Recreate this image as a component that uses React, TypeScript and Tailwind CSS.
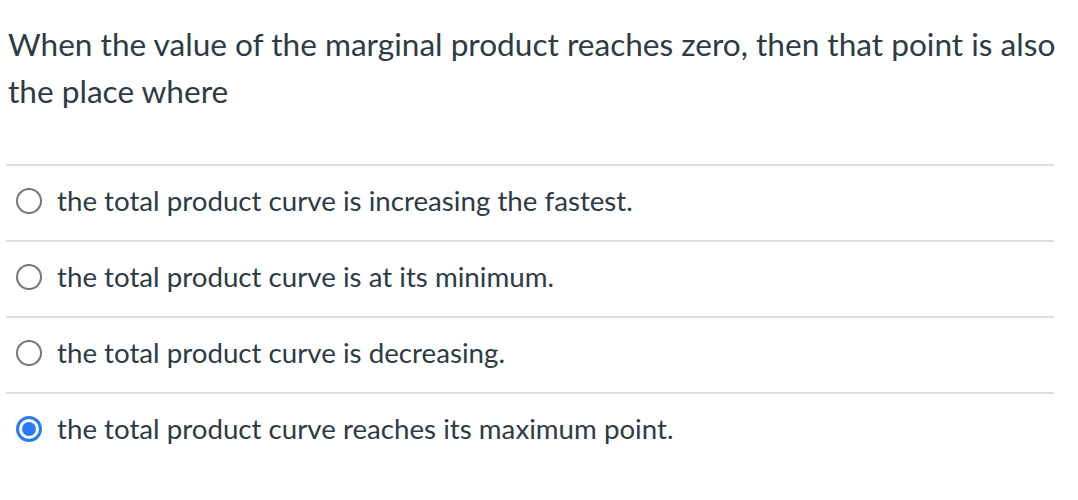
const options = [
  'the total product curve is increasing the fastest.',
  'the total product curve is at its minimum.',
  'the total product curve is decreasing.',
  'the total product curve reaches its maximum point.',
];

function Radio({ checked }: { checked: boolean }) {
  if (checked) {
    return (
      <span className="flex h-[26px] w-[26px] shrink-0 items-center justify-center rounded-full border-[3px] border-[#2b7bf5] bg-white">
        <span className="h-[14px] w-[14px] rounded-full bg-[#2b7bf5]" />
      </span>
    );
  }
  return <span className="h-[26px] w-[26px] shrink-0 rounded-full border-2 border-[#767676] bg-white" />;
}

export default function App() {
  const selected = 3;
  return (
    <div className="min-h-[500px] w-[1078px] bg-white pt-[21px] font-['Lato','Noto_Sans',sans-serif] text-[#2d3b45]">
      <p className="pl-[8px] text-[31.6px] leading-[47px]">
        When the value of the marginal product reaches zero, then that point is also the place where
      </p>
      <div className="mt-[49px] ml-[6px] w-[1048px]">
        {options.map((opt, i) => (
          <div key={i} className="flex h-[76px] items-center gap-[15px] border-t-2 border-[#dddddd] pb-[5px] pl-[10px]">
            <Radio checked={i === selected} />
            <span className="text-[27.7px]">{opt}</span>
          </div>
        ))}
      </div>
    </div>
  );
}
